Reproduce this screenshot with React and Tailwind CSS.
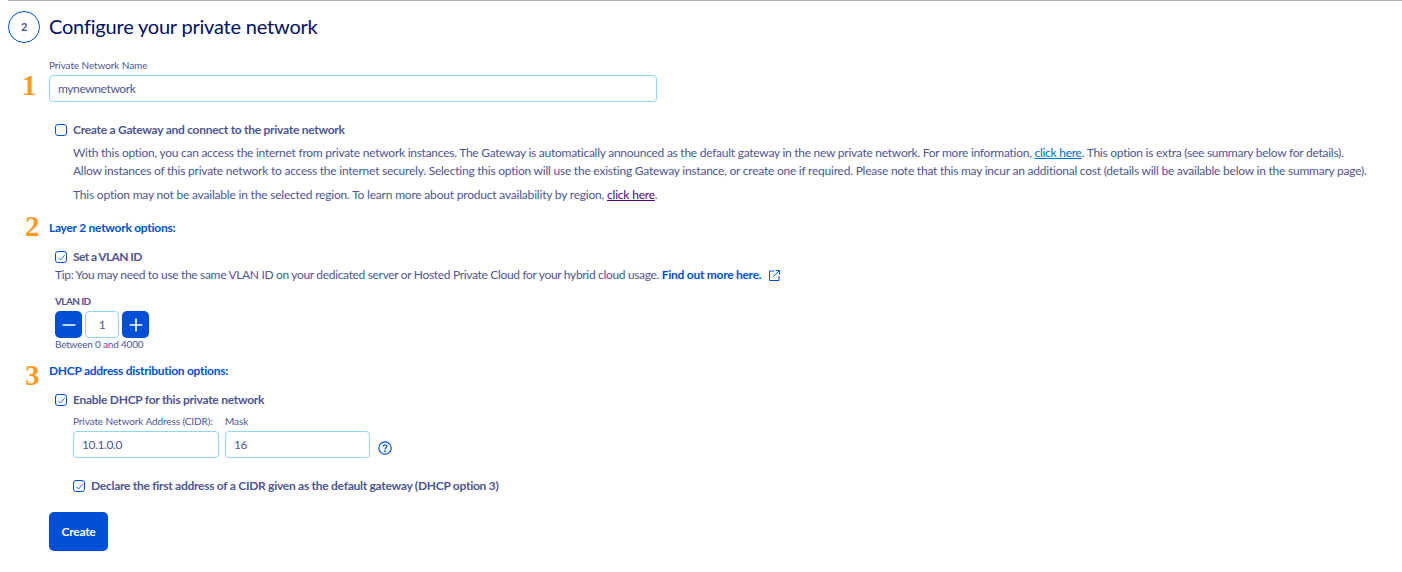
import { Minus, Plus } from "lucide-react";

const Check = ({ checked }) => (
  <span className="w-[12px] h-[12px] shrink-0 rounded-[3px] border border-[#0050d7] bg-white flex items-center justify-center">
    {checked && (
      <svg width="9" height="9" viewBox="0 0 10 10" fill="none" stroke="#0050d7" strokeWidth="0.9">
        <path d="M1.5 5.2 4 7.8 8.8 2" />
      </svg>
    )}
  </span>
);

const Marker = ({ className, children }) => (
  <span
    className={`absolute font-bold text-[29px] leading-none text-[#ff9a1f] ${className}`}
    style={{ fontFamily: '"Liberation Serif", serif' }}
  >
    {children}
  </span>
);

const TextInput = ({ value, className }) => (
  <div className={`h-[27px] rounded-[4px] border border-[#8fd6fb] bg-white flex items-center text-[12px] tracking-[-0.4px] text-[#4d5693] ${className}`}>
    {value}
  </div>
);

const Section = ({ children, className }) => (
  <h3 className={`h-[14px] flex items-center font-bold text-[12px] text-[#0050d7] ${className}`}>{children}</h3>
);

const Link = ({ children }) => <a className="text-[#006ad6] underline">{children}</a>;

export default function App() {
  return (
    <div
      className="relative w-[1402px] h-[572px] overflow-hidden bg-white text-[12px] tracking-[-0.27px] text-[#4d5693]"
      style={{ fontFamily: 'Lato, sans-serif' }}
    >
      <div className="ml-[8px] h-px bg-[#b3b3b3]" />

      {/* Header */}
      <div className="flex items-center gap-[9px] ml-[8px] mt-[10px]">
        <span className="w-[32px] h-[32px] rounded-full border border-[#0050d7] flex items-center justify-center text-[11px] font-bold text-[#4d5693]">
          2
        </span>
        <h2 className="mb-[2px] text-[20px] leading-[26px] tracking-[-0.2px] text-[#000e66]">Configure your private network</h2>
      </div>

      <Marker className="left-[22px] top-[71px]">1</Marker>
      <Marker className="left-[25px] top-[212px]">2</Marker>
      <Marker className="left-[25px] top-[361px]">3</Marker>

      <div className="ml-[49px]">
        <label className="block mt-[15px] text-[10px] leading-[14px] tracking-[-0.1px]">Private Network Name</label>
        <TextInput value="mynewnetwork" className="w-[608px] mt-[3px] pl-[8px]" />

        {/* Gateway option */}
        <div className="ml-[6px] mt-[21px] flex items-center gap-[6px] h-[14px] font-bold">
          <Check />
          <span>Create a Gateway and connect to the private network</span>
        </div>
        <div className="ml-[24px] mt-[7px] leading-[18px] whitespace-nowrap">
          <p className="tracking-[-0.26px]">
            With this option, you can access the internet from private network instances. The Gateway is automatically announced as the default gateway in the new private network. For more information, <Link>click here</Link>. This option is extra (see summary below for details).
          </p>
          <p className="tracking-[-0.23px]">
            Allow instances of this private network to access the internet securely. Selecting this option will use the existing Gateway instance, or create one if required. Please note that this may incur an additional cost (details will be available below in the summary page).
          </p>
          <p className="mt-[6px] tracking-[-0.2px]">
            This option may not be available in the selected region. To learn more about product availability by region, <a className="text-[#52057b] underline">click here</a>.
          </p>
        </div>

        {/* Layer 2 */}
        <Section className="mt-[17px]">Layer 2 network options:</Section>
        <div className="ml-[6px] mt-[15px] flex items-center gap-[6px] h-[14px] font-bold">
          <Check checked />
          <span className="tracking-[-0.6px]">Set a VLAN ID</span>
        </div>
        <p className="ml-[6px] mt-[2px] leading-[18px] flex items-center tracking-[-0.33px]">
          Tip: You may need to use the same VLAN ID on your dedicated server or Hosted Private Cloud for your hybrid cloud usage.&nbsp;
          <a className="font-bold tracking-[-0.27px] text-[#0050d7]">Find out more here.</a>
          <svg className="ml-[8px]" width="11" height="11" viewBox="0 0 11 11" fill="none" stroke="#0050d7" strokeWidth="1">
            <path d="M5 1H.5v9.5H10V6M6.5.5h4v4M10.5.5 4.5 6.5" />
          </svg>
        </p>
        <div className="ml-[6px] mt-[11px] h-[12px] flex items-center text-[10px] font-bold tracking-[-0.6px]">VLAN ID</div>
        <div className="ml-[6px] mt-[4px] flex items-center gap-[3px]">
          <button className="w-[27px] h-[27px] rounded-[5px] bg-[#0050d7] flex items-center justify-center text-white">
            <Minus size={20} strokeWidth={2} />
          </button>
          <div className="w-[34px] h-[27px] rounded-[4px] border border-[#8fd6fb] flex items-center justify-center text-[12px]">1</div>
          <button className="w-[27px] h-[27px] rounded-[5px] bg-[#0050d7] flex items-center justify-center text-white">
            <Plus size={20} strokeWidth={2} />
          </button>
        </div>
        <p className="ml-[6px] text-[10px] leading-[12px] tracking-[-0.2px]">Between 0 and 4000</p>

        {/* DHCP */}
        <Section className="mt-[14px]">DHCP address distribution options:</Section>
        <div className="ml-[6px] mt-[15px] flex items-center gap-[6px] h-[14px] font-bold">
          <Check checked />
          <span>Enable DHCP for this private network</span>
        </div>
        <div className="ml-[24px] mt-[8px] flex items-end gap-[6px]">
          <div className="w-[146px]">
            <label className="block text-[10px] leading-[12px] mb-[4px] whitespace-nowrap tracking-[-0.1px]">Private Network Address (CIDR):</label>
            <TextInput value="10.1.0.0" className="pl-[8px]" />
          </div>
          <div className="w-[145px]">
            <label className="block text-[10px] leading-[12px] mb-[4px] tracking-[-0.1px]">Mask</label>
            <TextInput value="16" className="pl-[8px]" />
          </div>
          <svg className="ml-[2px] mb-[3px]" width="14" height="14" viewBox="0 0 14 14" fill="none" stroke="#0050d7" strokeWidth="1.2">
            <circle cx="7" cy="7" r="6.2" />
            <path d="M5.2 5.5c0-2.3 3.7-2.3 3.7 0 0 1.4-1.9 1.4-1.9 3" />
            <circle cx="7" cy="10.3" r=".35" />
          </svg>
        </div>
        <div className="ml-[24px] mt-[21px] flex items-center gap-[6px] h-[14px] font-bold">
          <Check checked />
          <span>Declare the first address of a CIDR given as the default gateway (DHCP option 3)</span>
        </div>

        <button className="mt-[19px] w-[59px] h-[39px] rounded-[5px] bg-[#0050d7] text-white font-bold text-[12px]">Create</button>
      </div>
    </div>
  );
}
